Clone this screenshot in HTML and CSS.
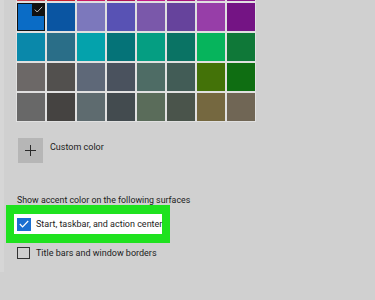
FILE: index.html
```html
<!DOCTYPE html>
<html lang="en">
<head>
  <meta charset="UTF-8">
  <meta name="viewport" content="width=device-width, initial-scale=1">
  <title>Colors</title>
  <link rel="stylesheet" href="styles.css">
</head>
<body>
  <div class="page">
    <!-- Палитра акцентных цветов -->
    <div class="swatches">
      <span class="sw" style="background:#c8404e"></span>
      <span class="sw" style="background:#c8202e"></span>
      <span class="sw" style="background:#cc1a62"></span>
      <span class="sw" style="background:#b01454"></span>
      <span class="sw" style="background:#c41a86"></span>
      <span class="sw" style="background:#a8147a"></span>
      <span class="sw" style="background:#a83ca4"></span>
      <span class="sw" style="background:#88168a"></span>

      <span class="sw selected" style="background:#0a6cc6">
        <span class="tick">
          <svg width="9" height="7" viewBox="0 0 9 7"><path d="M0.8 3.6 L3.2 6 L8.2 0.8" fill="none" stroke="#bfbfbf" stroke-width="1"/></svg>
        </span>
      </span>
      <span class="sw" style="background:#0a55a2"></span>
      <span class="sw" style="background:#7c78bc"></span>
      <span class="sw" style="background:#5852b4"></span>
      <span class="sw" style="background:#7a58aa"></span>
      <span class="sw" style="background:#66439c"></span>
      <span class="sw" style="background:#973ea8"></span>
      <span class="sw" style="background:#741484"></span>

      <span class="sw" style="background:#0a88aa"></span>
      <span class="sw" style="background:#2a6e88"></span>
      <span class="sw" style="background:#04a2ac"></span>
      <span class="sw" style="background:#057378"></span>
      <span class="sw" style="background:#059e82"></span>
      <span class="sw" style="background:#0a7364"></span>
      <span class="sw" style="background:#06b45c"></span>
      <span class="sw" style="background:#0f7838"></span>

      <span class="sw" style="background:#6c6867"></span>
      <span class="sw" style="background:#52504e"></span>
      <span class="sw" style="background:#5e6878"></span>
      <span class="sw" style="background:#4a525e"></span>
      <span class="sw" style="background:#4e6c65"></span>
      <span class="sw" style="background:#425c56"></span>
      <span class="sw" style="background:#437208"></span>
      <span class="sw" style="background:#0f6e12"></span>

      <span class="sw" style="background:#686868"></span>
      <span class="sw" style="background:#454341"></span>
      <span class="sw" style="background:#5e6b6f"></span>
      <span class="sw" style="background:#434b4f"></span>
      <span class="sw" style="background:#5a6c5a"></span>
      <span class="sw" style="background:#4a544b"></span>
      <span class="sw" style="background:#756840"></span>
      <span class="sw" style="background:#706655"></span>
    </div>

    <div class="custom">
      <span class="plus-box">
        <svg width="11" height="11" viewBox="0 0 11 11"><path d="M5.5 0 V11 M0 5.5 H11" stroke="#2a2a2a" stroke-width="1"/></svg>
      </span>
      <span class="custom-label">Custom color</span>
    </div>

    <p class="section-title">Show accent color on the following surfaces</p>

    <div class="highlight">
      <label class="check-row">
        <span class="box checked">
          <svg width="10" height="8" viewBox="0 0 10 8"><path d="M0.8 4 L3.6 6.8 L9.2 1" fill="none" stroke="#fff" stroke-width="1.2"/></svg>
        </span>
        Start, taskbar, and action center
      </label>
    </div>

    <label class="check-row plain">
      <span class="box"></span>
      Title bars and window borders
    </label>
  </div>
</body>
</html>
```

FILE: styles.css
```css
body { margin:0; background:#d0d0d0; font-family:Roboto, 'Noto Sans', sans-serif; color:#1c1c1c; overflow:hidden; }
.page { height:300px; border-left:4px solid #d6d6d6; box-sizing:border-box; }

/* Сетка цветов */
.swatches { display:grid; grid-template-columns:repeat(8, 28px); grid-auto-rows:28px; gap:2px; padding:1px; margin:-28px 0 0 12px; width:max-content; background:#e0e0e0; }
.sw { display:block; position:relative; box-sizing:border-box; }
.sw.selected { border:1.5px solid #111; }
.tick { position:absolute; top:-1px; right:-1px; width:13px; height:13px; background:#111; display:flex; align-items:center; justify-content:center; }

/* Свой цвет */
.custom { display:flex; align-items:flex-start; gap:7px; margin:16px 0 0 14px; }
.plus-box { width:25px; height:25px; background:#b6b6b6; display:flex; align-items:center; justify-content:center; }
.custom-label { font-size:9px; line-height:12px; margin-top:3px; }

.section-title { font-size:8.8px; line-height:10px; margin:32px 0 0 13px; white-space:nowrap; }

/* Зелёная рамка вокруг пункта */
.highlight { margin:0 0 0 2px; width:148px; border:8px solid #1fe21f; border-top-width:9px; border-bottom-width:9px; background:#fff; }
.check-row { display:flex; align-items:center; gap:5px; height:20px; padding-left:3px; font-size:9px; white-space:nowrap; }
.box { flex:none; width:14px; height:13px; box-sizing:border-box; border:1.5px solid #333; display:flex; align-items:center; justify-content:center; }
.box.checked { background:#1a6fd0; border:none; }
.check-row.plain { height:14px; margin:3px 0 0 13px; padding-left:0; gap:6px; }
.check-row.plain .box { width:13px; height:12px; }
```
